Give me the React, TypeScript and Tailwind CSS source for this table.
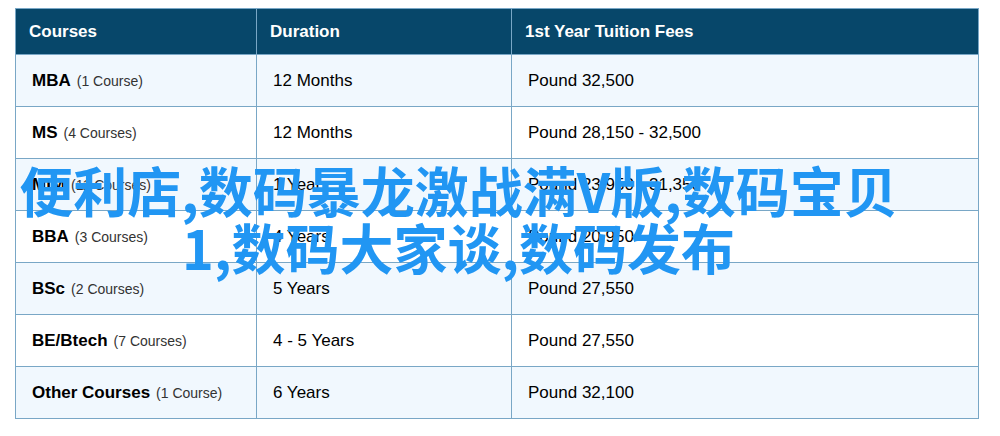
const ROWS = [
  { name: "MBA", count: "1 Course", duration: "12 Months", fee: "Pound 32,500" },
  { name: "MS", count: "4 Courses", duration: "12 Months", fee: "Pound 28,150 - 32,500" },
  { name: "MIM", count: "11 Courses", duration: "1 Year", fee: "Pound 23,950 - 31,350" },
  { name: "BBA", count: "3 Courses", duration: "4 Years", fee: "Pound 20,950" },
  { name: "BSc", count: "2 Courses", duration: "5 Years", fee: "Pound 27,550" },
  { name: "BE/Btech", count: "7 Courses", duration: "4 - 5 Years", fee: "Pound 27,550" },
  { name: "Other Courses", count: "1 Course", duration: "6 Years", fee: "Pound 32,100" },
];

export default function App() {
  return (
    <div className="relative h-[436px] w-[1000px] bg-white pl-[15px] pt-[8px] font-['Liberation_Sans',Arial,sans-serif]">
      <table className="w-[964px] border-collapse text-[17px] text-black">
        <thead>
          <tr className="h-[46px] bg-[#07476a] text-left text-white">
            <th className="w-[241px] border border-[#79a7c6] pl-[13px] font-bold">Courses</th>
            <th className="w-[255px] border border-[#79a7c6] pl-[13px] font-bold">Duration</th>
            <th className="border border-[#79a7c6] pl-[13px] font-bold">1st Year Tuition Fees</th>
          </tr>
        </thead>
        <tbody>
          {ROWS.map((row, i) => (
            <tr key={row.name} className={i % 2 === 0 ? "h-[52px] bg-[#f1f8fe]" : "h-[52px] bg-white"}>
              <td className="border border-[#79a7c6] pl-[16px]">
                <span className="font-bold">{row.name}</span>
                <span className="ml-[6px] text-[14px] text-[#333]">({row.count})</span>
              </td>
              <td className="border border-[#79a7c6] pl-[16px]">{row.duration}</td>
              <td className="border border-[#79a7c6] pl-[16px]">{row.fee}</td>
            </tr>
          ))}
        </tbody>
      </table>

      {/* watermark text over the table */}
      <div className="absolute left-0 top-[161px] w-[917px] text-center font-['Noto_Sans_CJK_SC',sans-serif] text-[54px] font-bold leading-[57px] text-[#2196f3]">
        便利店,数码暴龙激战满V版,数码宝贝
        <br />
        1,数码大家谈,数码发布
      </div>
    </div>
  );
}
